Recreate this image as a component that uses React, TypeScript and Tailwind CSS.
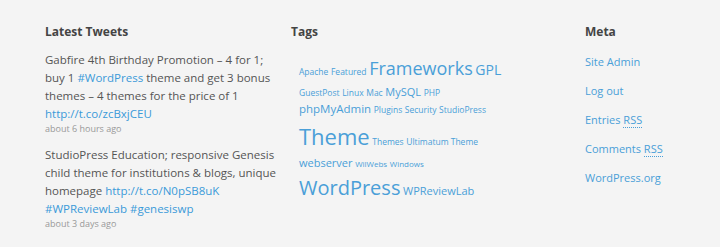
const tweets = [
  {
    parts: [
      { t: "Gabfire 4th Birthday Promotion – 4 for 1; buy 1 " },
      { t: "#WordPress", link: true },
      { t: " theme and get 3 bonus themes – 4 themes for the price of 1 " },
      { t: "http://t.co/zcBxjCEU", link: true },
    ],
    time: "about 6 hours ago",
  },
  {
    parts: [
      { t: "StudioPress Education; responsive Genesis child theme for institutions & blogs, unique homepage " },
      { t: "http://t.co/N0pSB8uK", link: true },
      { t: " " },
      { t: "#WPReviewLab", link: true },
      { t: " " },
      { t: "#genesiswp", link: true },
    ],
    time: "about 3 days ago",
  },
];

// tag cloud, sizes follow post counts
const tags: [string, string][] = [
  ["Apache", "text-[8.5px]"],
  ["Featured", "text-[8.5px]"],
  ["Frameworks", "text-[18px]"],
  ["GPL", "text-[14px]"],
  ["GuestPost", "text-[8.5px]"],
  ["Linux", "text-[8.5px]"],
  ["Mac", "text-[8.5px]"],
  ["MySQL", "text-[11px]"],
  ["PHP", "text-[8.5px]"],
  ["phpMyAdmin", "text-[11.5px]"],
  ["Plugins", "text-[8.5px]"],
  ["Security", "text-[8.5px]"],
  ["StudioPress", "text-[8.5px]"],
  ["Theme", "text-[22px]"],
  ["Themes", "text-[8.5px]"],
  ["Ultimatum Theme", "text-[8.5px]"],
  ["webserver", "text-[11px]"],
  ["WilWebs", "text-[8px]"],
  ["Windows", "text-[8px]"],
  ["WordPress", "text-[20px]"],
  ["WPReviewLab", "text-[11px]"],
];

const meta = [
  { t: "Site Admin" },
  { t: "Log out" },
  { t: "Entries", rss: true },
  { t: "Comments", rss: true },
  { t: "WordPress.org" },
];

const Heading = ({ children }: { children: string }) => (
  <h4 className="text-[12px] font-bold text-[#444] leading-[16px] mb-[11px]">{children}</h4>
);

export default function App() {
  return (
    <div
      className="w-[720px] h-[247px] bg-[#f4f4f4] overflow-hidden"
      style={{ fontFamily: '"Open Sans", "Noto Sans", sans-serif' }}
    >
      <div className="flex pt-[24px] pl-[45px]">
        <div className="w-[240px]">
          <Heading>Latest Tweets</Heading>
          {tweets.map((tw, i) => (
            <div key={i} className="mb-[12px]">
              <p className="text-[11.5px] leading-[18px] text-[#555]">
                {tw.parts.map((p, j) =>
                  p.link ? (
                    <a key={j} className="text-[#3a9ad9]">{p.t}</a>
                  ) : (
                    <span key={j}>{p.t}</span>
                  )
                )}
              </p>
              <p className="text-[9px] leading-[11px] text-[#999]">{tw.time}</p>
            </div>
          ))}
        </div>
        <div className="w-[214px] ml-[6px]">
          <Heading>Tags</Heading>
          <div className="pl-[8px] pt-[3px] text-[10px] leading-[1.6] text-[#4a9fd8]">
            {tags.map(([t, s]) => (
              <span key={t}>
                <a className={s}>{t}</a>{" "}
              </span>
            ))}
          </div>
        </div>
        <div className="ml-[80px]">
          <Heading>Meta</Heading>
          <ul className="mt-[-4px] text-[11px] text-[#4a9fd8]">
            {meta.map((m) => (
              <li key={m.t} className="leading-[29px]">
                {m.t}
                {m.rss && (
                  <>
                    {" "}
                    <span className="border-b border-dotted border-[#4a9fd8]">RSS</span>
                  </>
                )}
              </li>
            ))}
          </ul>
        </div>
      </div>
    </div>
  );
}
